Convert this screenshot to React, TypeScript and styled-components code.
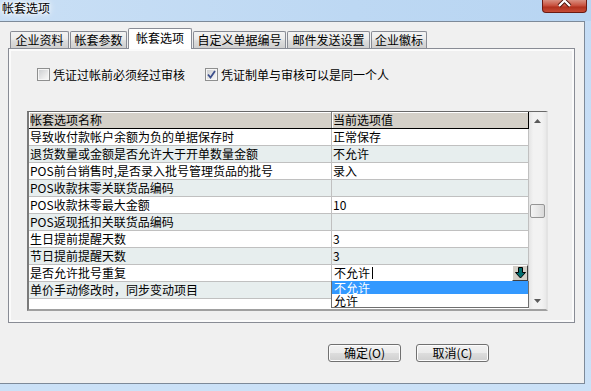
import styled, { createGlobalStyle } from 'styled-components'

const GlobalStyle = createGlobalStyle`
  html, body { margin: 0; padding: 0; }
  body {
    font-family: "Noto Sans CJK SC", "Noto Sans", sans-serif;
    font-size: 12px;
    color: #000;
  }
`

const Frame = styled.div`
  width: 591px;
  height: 391px;
  overflow: hidden;
  display: flex;
  flex-direction: column;
  background: linear-gradient(#c4dcf5, #cbe1f7);
`

const TitleBar = styled.div`
  height: 21px;
  flex-shrink: 0;
  display: flex;
  justify-content: space-between;
  align-items: flex-start;
  padding: 0 4px 0 2px;
  background: linear-gradient(90deg, #c9dff5, #bdd8f3 60%, #b8d5f2);
`

const Title = styled.span`
  font-size: 12px;
  line-height: 16px;
  text-shadow: 0 0 3px #fff, 0 0 6px #fff, 0 0 9px #fff;
`

const CloseButton = styled.div`
  width: 45px;
  height: 13px;
  box-sizing: border-box;
  border: 1px solid #6b1a12;
  border-top: none;
  border-radius: 0 0 4px 4px;
  background: linear-gradient(#d98f80, #c95340 45%, #b2321e 60%, #c64c37);
  display: flex;
  justify-content: center;
  overflow: hidden;
`

const Client = styled.div`
  width: 585px;
  height: 363px;
  box-sizing: border-box;
  border: 1px solid #7d8a99;
  border-left: none;
  background: #f0f0f0;
  display: flex;
  flex-direction: column;
`

const TabStrip = styled.div`
  margin-top: 6px;
  height: 20px;
  padding-left: 10px;
  display: flex;
  align-items: flex-end;
  gap: 1px;
  position: relative;
  z-index: 1;
`

const Tab = styled.div<{ $width: number; $active?: boolean }>`
  width: ${({ $width }) => $width}px;
  height: ${({ $active }) => ($active ? 21 : 17)}px;
  margin-bottom: ${({ $active }) => ($active ? -1 : 0)}px;
  box-sizing: border-box;
  border: 1px solid #898c95;
  border-bottom: none;
  border-radius: 2px 2px 0 0;
  background: ${({ $active }) =>
    $active ? '#ffffff' : 'linear-gradient(#f3f3f3, #ebebeb 45%, #dddddd 55%, #cfcfcf)'};
  text-align: center;
  font-size: 12px;
  line-height: 16px;
  padding-top: ${({ $active }) => ($active ? 1 : 0)}px;
  white-space: nowrap;
`

const Panel = styled.div`
  margin-left: 8px;
  width: 567px;
  height: 275px;
  box-sizing: border-box;
  border: 1px solid #898c95;
  background: #f0f0f0;
  box-shadow: inset 0 0 0 2px #fbfbfb;
  padding-top: 19px;
  display: flex;
  flex-direction: column;
`

const CheckRow = styled.div`
  height: 13px;
  padding-left: 28px;
  display: flex;
  align-items: center;
`

const CheckItem = styled.label`
  display: flex;
  align-items: center;
  gap: 3px;
  margin-right: 20px;
  font-size: 12px;
  line-height: 13px;
  white-space: nowrap;
`

const Box = styled.span`
  width: 13px;
  height: 13px;
  box-sizing: border-box;
  border: 1px solid #8e8f8f;
  background: linear-gradient(135deg, #c9cbce, #eeeeee 70%, #fafafa);
  box-shadow: inset 0 0 0 1px #f6f6f6;
  display: flex;
  align-items: center;
  justify-content: center;
`

const Grid = styled.div`
  margin-top: 30px;
  margin-left: 18px;
  width: 521px;
  height: 200px;
  box-sizing: border-box;
  border-style: solid;
  border-width: 1px 2px 2px 2px;
  border-color: #696969 #e3e3e3 #a0a0a0 #7a7a7a;
  background: #fff;
  display: flex;
`

const Table = styled.div`
  width: 500px;
  display: flex;
  flex-direction: column;
`

const HeaderRow = styled.div`
  display: grid;
  grid-template-columns: 303px 197px;
  border-bottom: 1px solid #000;
`

const HeaderCell = styled.div<{ $last?: boolean }>`
  height: 16px;
  box-sizing: border-box;
  background: #d4d0c8;
  box-shadow: inset 1px 1px 0 #ffffff;
  border-right: 1px solid ${({ $last }) => ($last ? '#000' : '#808080')};
  padding-left: 1px;
  font-size: 12px;
  line-height: 16px;
  white-space: nowrap;
`

const Row = styled.div<{ $shade?: boolean }>`
  display: grid;
  grid-template-columns: 303px 197px;
  border-bottom: 1px solid #c0c0c0;
  background: ${({ $shade }) => ($shade ? '#e7eeee' : '#ffffff')};
`

const Cell = styled.div`
  height: 16px;
  box-sizing: border-box;
  border-right: 1px solid #c0c0c0;
  padding-left: 1px;
  font-size: 12px;
  line-height: 16px;
  white-space: nowrap;
  overflow: hidden;
`

const ComboCell = styled.div`
  height: 16px;
  box-sizing: border-box;
  border-right: 1px solid #c0c0c0;
  padding-left: 2px;
  display: flex;
  align-items: center;
  position: relative;
  font-size: 12px;
  line-height: 16px;
  white-space: nowrap;
`

const Caret = styled.span`
  width: 1px;
  height: 12px;
  margin-left: 2px;
  background: #000;
`

const DropButton = styled.div`
  margin-left: auto;
  width: 16px;
  height: 16px;
  box-sizing: border-box;
  border: 1px solid;
  border-color: #ffffff #404040 #404040 #ffffff;
  background: #d4d0c8;
  display: flex;
  align-items: center;
  justify-content: center;
`

const DropList = styled.div`
  position: absolute;
  top: 16px;
  left: -1px;
  width: 198px;
  box-sizing: border-box;
  border: 1px solid #6f6f6f;
  border-top: none;
  background: #fff;
  z-index: 2;
`

const DropItem = styled.div<{ $selected?: boolean }>`
  height: 13px;
  padding-left: 2px;
  font-size: 12px;
  line-height: 13px;
  overflow: hidden;
  color: ${({ $selected }) => ($selected ? '#fff' : '#000')};
  background: ${({ $selected }) => ($selected ? '#3399ff' : 'transparent')};
`

const ScrollBar = styled.div`
  width: 17px;
  display: flex;
  flex-direction: column;
  align-items: center;
  background: linear-gradient(90deg, #e4e4e4, #f2f2f2 25%, #f2f2f2 75%, #e9e9e9);
`

const ArrowBox = styled.div`
  height: 17px;
  width: 17px;
  display: flex;
  align-items: center;
  justify-content: center;
`

const Track = styled.div`
  flex: 1;
`

const Thumb = styled.div<{ $offset: number }>`
  margin-top: ${({ $offset }) => $offset}px;
  width: 15px;
  height: 14px;
  box-sizing: border-box;
  border: 1px solid #959595;
  border-radius: 2px;
  background: linear-gradient(90deg, #f4f4f4, #e8e8e8 50%, #d9d9d9);
`

const Footer = styled.div`
  margin-top: 21px;
  padding-left: 328px;
  display: flex;
  gap: 15px;
`

const Button = styled.button`
  width: 73px;
  height: 18px;
  box-sizing: border-box;
  padding: 0;
  border: 1px solid #707070;
  border-radius: 3px;
  background: linear-gradient(#f2f2f2, #ebebeb 50%, #dddddd 51%, #cfcfcf);
  box-shadow: inset 0 0 0 1px #fcfcfc;
  font-family: "Noto Sans CJK SC", "Noto Sans", sans-serif;
  font-size: 12px;
  line-height: 16px;
  color: #000;
`

const tabs = [
  { label: '企业资料', width: 59 },
  { label: '帐套参数', width: 57 },
  { label: '帐套选项', width: 64, active: true },
  { label: '自定义单据编号', width: 93 },
  { label: '邮件发送设置', width: 83 },
  { label: '企业徽标', width: 56 },
]

const rows: { name: string; value: string; combo?: boolean }[] = [
  { name: '导致收付款帐户余额为负的单据保存时', value: '正常保存' },
  { name: '退货数量或金额是否允许大于开单数量金额', value: '不允许' },
  { name: 'POS前台销售时,是否录入批号管理货品的批号', value: '录入' },
  { name: 'POS收款抹零关联货品编码', value: '' },
  { name: 'POS收款抹零最大金额', value: '10' },
  { name: 'POS返现抵扣关联货品编码', value: '' },
  { name: '生日提前提醒天数', value: '3' },
  { name: '节日提前提醒天数', value: '3' },
  { name: '是否允许批号重复', value: '不允许', combo: true },
  { name: '单价手动修改时，同步变动项目', value: '' },
]

function CheckMark() {
  return (
    <svg width="9" height="9" viewBox="0 0 9 9">
      <path d="M1 4.5 L3.5 7.5 L8 1" fill="none" stroke="#3c4f8c" strokeWidth="1.8" />
    </svg>
  )
}

function DownArrow() {
  return (
    <svg width="11" height="12" viewBox="0 0 11 12">
      <path
        d="M3.5 0.5 H7.5 V5.5 H10.5 L5.5 11 L0.5 5.5 H3.5 Z"
        fill="#006d6d"
        stroke="#000"
        strokeWidth="1"
      />
    </svg>
  )
}

export default function App() {
  return (
    <Frame>
      <GlobalStyle />
      <TitleBar>
        <Title>帐套选项</Title>
        <CloseButton>
          <svg width="20" height="12" viewBox="0 0 20 12">
            <path d="M4 -5 L15 6 M15 -5 L4 6" stroke="#4a1208" strokeWidth="4" />
            <path d="M4 -5 L15 6 M15 -5 L4 6" stroke="#ffffff" strokeWidth="2.2" />
          </svg>
        </CloseButton>
      </TitleBar>
      <Client>
        <TabStrip>
          {tabs.map((t) => (
            <Tab key={t.label} $width={t.width} $active={t.active}>
              {t.label}
            </Tab>
          ))}
        </TabStrip>
        <Panel>
          <CheckRow>
            <CheckItem>
              <Box />
              凭证过帐前必须经过审核
            </CheckItem>
            <CheckItem>
              <Box>
                <CheckMark />
              </Box>
              凭证制单与审核可以是同一个人
            </CheckItem>
          </CheckRow>
          <Grid>
            <Table>
              <HeaderRow>
                <HeaderCell>帐套选项名称</HeaderCell>
                <HeaderCell $last>当前选项值</HeaderCell>
              </HeaderRow>
              {rows.map((r, i) => (
                <Row key={r.name} $shade={i % 2 === 1}>
                  <Cell>{r.name}</Cell>
                  {r.combo ? (
                    <ComboCell>
                      {r.value}
                      <Caret />
                      <DropButton>
                        <DownArrow />
                      </DropButton>
                      <DropList>
                        <DropItem $selected>不允许</DropItem>
                        <DropItem>允许</DropItem>
                      </DropList>
                    </ComboCell>
                  ) : (
                    <Cell>{r.value}</Cell>
                  )}
                </Row>
              ))}
            </Table>
            <ScrollBar>
              <ArrowBox>
                <svg width="7" height="4" viewBox="0 0 7 4">
                  <path d="M0 4 L3.5 0 L7 4 Z" fill="#5a5a5a" />
                </svg>
              </ArrowBox>
              <Track>
                <Thumb $offset={75} />
              </Track>
              <ArrowBox>
                <svg width="7" height="4" viewBox="0 0 7 4">
                  <path d="M0 0 L3.5 4 L7 0 Z" fill="#5a5a5a" />
                </svg>
              </ArrowBox>
            </ScrollBar>
          </Grid>
        </Panel>
        <Footer>
          <Button>确定(O)</Button>
          <Button>取消(C)</Button>
        </Footer>
      </Client>
    </Frame>
  )
}
